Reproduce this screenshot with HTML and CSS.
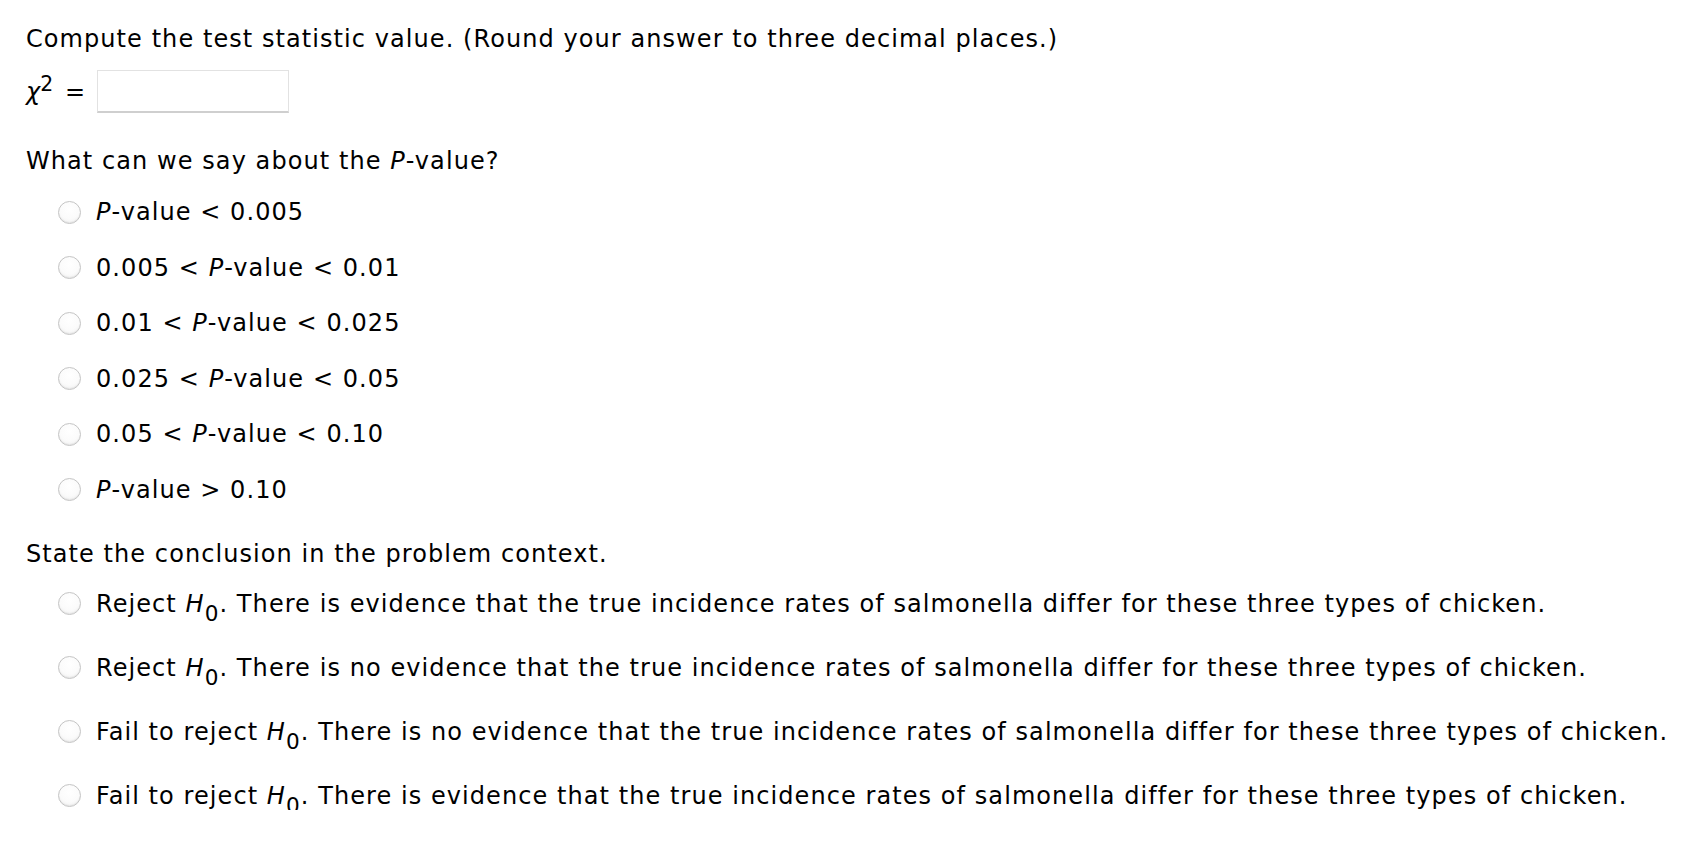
FILE: index.html
```html
<!DOCTYPE html>
<html>
<head>
<meta charset="utf-8">
<link rel="stylesheet" href="styles.css">
</head>
<body>
<div class="page">
  <p class="prompt first">Compute the test statistic value. (Round your answer to three decimal places.)</p>
  <div class="answer">
    <span class="chi"><i>χ</i><sup>2</sup></span>
    <span class="eq">=</span>
    <span class="input"></span>
  </div>
  <p class="prompt pv">What can we say about the <i>P</i>-value?</p>
  <ul class="options short">
    <li><span class="radio"></span><span><i>P</i>-value &lt; 0.005</span></li>
    <li><span class="radio"></span><span>0.005 &lt; <i>P</i>-value &lt; 0.01</span></li>
    <li><span class="radio"></span><span>0.01 &lt; <i>P</i>-value &lt; 0.025</span></li>
    <li><span class="radio"></span><span>0.025 &lt; <i>P</i>-value &lt; 0.05</span></li>
    <li><span class="radio"></span><span>0.05 &lt; <i>P</i>-value &lt; 0.10</span></li>
    <li><span class="radio"></span><span><i>P</i>-value &gt; 0.10</span></li>
  </ul>
  <p class="prompt concl">State the conclusion in the problem context.</p>
  <ul class="options long">
    <li><span class="radio"></span><span>Reject <i>H</i><sub>0</sub>. There is evidence that the true incidence rates of salmonella differ for these three types of chicken.</span></li>
    <li><span class="radio"></span><span>Reject <i>H</i><sub>0</sub>. There is no evidence that the true incidence rates of salmonella differ for these three types of chicken.</span></li>
    <li><span class="radio"></span><span>Fail to reject <i>H</i><sub>0</sub>. There is no evidence that the true incidence rates of salmonella differ for these three types of chicken.</span></li>
    <li><span class="radio"></span><span>Fail to reject <i>H</i><sub>0</sub>. There is evidence that the true incidence rates of salmonella differ for these three types of chicken.</span></li>
  </ul>
</div>
</body>
</html>
```
FILE: styles.css
```css
html, body {
  margin: 0;
  padding: 0;
  background: #fff;
}
.page {
  font-family: "DejaVu Sans", Verdana, sans-serif;
  font-size: 24px;
  letter-spacing: 1.07px;
  line-height: 28px;
  color: #000;
  padding: 25px 0 0 26px;
}
.prompt {
  margin: 0;
}
.answer {
  display: flex;
  align-items: center;
  margin-top: 17px;
  height: 43px;
}
.chi {
  display: inline-block;
  width: 39px;
  letter-spacing: 0;
}
.chi sup {
  font-size: 0.85em;
  line-height: 0;
  vertical-align: 0.45em;
}
.eq {
  letter-spacing: 0;
  margin-right: 12px;
}
.input {
  display: inline-block;
  box-sizing: border-box;
  width: 192px;
  height: 43px;
  border: 1px solid #e2e2e2;
  border-bottom: 2px solid #cfcfcf;
  background: #fff;
}
.pv {
  margin-top: 34px;
}
.options {
  list-style: none;
  margin: 0;
  padding: 0;
  display: flex;
  flex-direction: column;
}
.options li {
  display: flex;
  align-items: center;
  height: 28px;
}
.options.short {
  margin-top: 23px;
  gap: 27.6px;
}
.options.long {
  margin-top: 22px;
  gap: 36px;
}
.radio {
  box-sizing: border-box;
  width: 23px;
  height: 23px;
  border-radius: 50%;
  border: 1px solid #c4c4c4;
  background: radial-gradient(circle at 50% 35%, #ffffff 0%, #fbfbfb 55%, #ececec 100%);
  box-shadow: inset 0 -1px 1px rgba(0,0,0,0.06);
  margin-left: 32px;
  margin-right: 15px;
  flex: none;
}
.options sub {
  font-size: 0.9em;
  line-height: 0;
  vertical-align: -0.4em;
}
.concl {
  margin-top: 36px;
}
```
